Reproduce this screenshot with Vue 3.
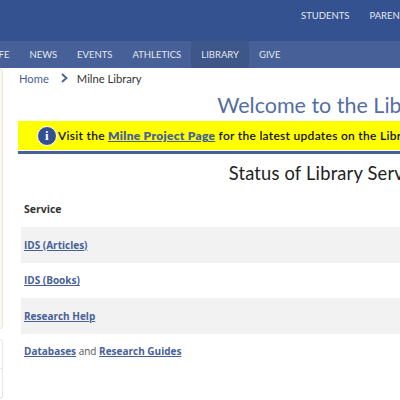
<template>
  <div class="page">
    <header class="top-bar">
      <a class="top-link">STUDENTS</a>
      <a class="top-link">PARENTS</a>
    </header>
    <nav class="main-nav">
      <a class="nav-link">LIFE</a>
      <a class="nav-link">NEWS</a>
      <a class="nav-link">EVENTS</a>
      <a class="nav-link">ATHLETICS</a>
      <a class="nav-link active">LIBRARY</a>
      <a class="nav-link">GIVE</a>
    </nav>
    <div class="body-row">
      <aside class="sidebar">
        <div class="side-card cream"></div>
        <div class="side-card">
          <div class="side-item"></div>
          <div class="side-item"></div>
        </div>
      </aside>
      <main class="content">
        <div class="crumbs">
          <a class="crumb-link">Home</a>
          <svg class="crumb-sep" width="9" height="10" viewBox="0 0 9 10">
            <path d="M2 1l4.500 4L2 9" fill="none" stroke="#476097" stroke-width="1.800" />
          </svg>
          <span>Milne Library</span>
        </div>
        <h1 class="title">Welcome to the Library</h1>
        <div class="notice">
          <span class="info-icon">i</span>
          <span>Visit the <a class="notice-link">Milne Project Page</a> for the latest updates on the Library renovation</span>
        </div>
        <h2 class="subtitle">Status of Library Services</h2>
        <div class="table">
          <div class="row head">Service</div>
          <div v-for="(row, i) in rows" :key="row" class="row" :class="{ striped: i % 2 === 0 }">
            <a class="svc-link">{{ row }}</a>
          </div>
          <div class="row">
            <span><a class="svc-link">Databases</a> and <a class="svc-link">Research Guides</a></span>
          </div>
        </div>
      </main>
    </div>
  </div>
</template>

<script setup>
const rows = ['IDS (Articles)', 'IDS (Books)', 'Research Help'];
</script>

<style>
html, body {
  margin: 0;
  overflow: hidden;
  background: #fff;
}
</style>

<style scoped>
.page {
  width: 400px;
  height: 400px;
  overflow: hidden;
  font-family: "Open Sans", "Liberation Sans", sans-serif;
  color: #333;
}

.top-bar {
  height: 41px;
  box-sizing: border-box;
  background: #345290;
  display: flex;
  align-items: flex-start;
  gap: 20px;
  padding: 9px 0 0 301px;
  white-space: nowrap;
}

.top-link {
  font-family: Lato, sans-serif;
  font-size: 9.500px;
  line-height: 14px;
  color: #e4e8f0;
}

.main-nav {
  height: 27px;
  background: #476097;
  display: flex;
  margin-left: -19px;
  white-space: nowrap;
}

.nav-link {
  font-family: Lato, sans-serif;
  font-size: 9.500px;
  line-height: 27px;
  padding: 0 10px;
  color: #e4e8f0;
}

.nav-link.active {
  background: #3f5688;
}

.body-row {
  display: flex;
}

.sidebar {
  width: 3px;
  flex-shrink: 0;
  display: flex;
  flex-direction: column;
  gap: 10px;
  padding-top: 1px;
  margin-left: -10px;
  padding-left: 10px;
}

.side-card {
  box-sizing: border-box;
  border: 1px solid #e6e6e6;
  border-radius: 3px;
  margin-left: -10px;
}

.cream {
  height: 260px;
  border-color: #ece6d2;
  background: #fdfbef;
}

.side-item {
  height: 28px;
  border-bottom: 1px solid #e6e6e6;
}

.content {
  width: 620px;
  flex-shrink: 0;
  padding-left: 15px;
}

.crumbs {
  display: flex;
  align-items: center;
  height: 20px;
  padding-left: 1px;
  font-size: 11.200px;
  color: #333;
  font-family: Lato, sans-serif;
}

.crumb-link {
  color: #476097;
}

.crumb-sep {
  margin: 0 8px 0 11px;
}

.title {
  margin: 0;
  height: 33px;
  font-family: Lato, sans-serif;
  font-size: 21.500px;
  font-weight: 400;
  line-height: 34px;
  color: #546da3;
  text-align: center;
}

.notice {
  height: 29px;
  background: #ff0;
  display: flex;
  align-items: center;
  gap: 1px;
  padding-left: 19px;
  font-family: Lato, sans-serif;
  font-size: 12px;
  font-weight: 600;
  letter-spacing: 0.28px;
  color: #111;
  white-space: nowrap;
}

.info-icon {
  width: 18px;
  height: 18px;
  border-radius: 50%;
  background: #344f94;
  border: 1px solid #fff;
  color: #fff;
  font-family: "Liberation Serif", serif;
  font-size: 13px;
  font-weight: 700;
  line-height: 18px;
  text-align: center;
}

.notice-link {
  color: #476097;
  font-weight: 800;
  text-decoration: underline;
}

.subtitle {
  margin: 1px 0 0;
  padding: 6px 0 0 8px;
  border-top: 3px solid #476097;
  font-family: Lato, sans-serif;
  font-size: 18.300px;
  font-weight: 400;
  letter-spacing: 0.2px;
  line-height: 26px;
  color: #222;
  text-align: center;
}

.table {
  margin: 5.500px 0 0 3px;
}

.row {
  height: 35.500px;
  display: flex;
  align-items: center;
  padding-left: 3px;
  font-size: 10px;
  color: #555;
}

.row.head {
  color: #333;
  font-size: 10.500px;
  font-weight: 700;
}

.row.striped {
  background: #f2f2f2;
}

.svc-link {
  color: #476097;
  font-weight: 700;
  text-decoration: underline;
}
</style>
